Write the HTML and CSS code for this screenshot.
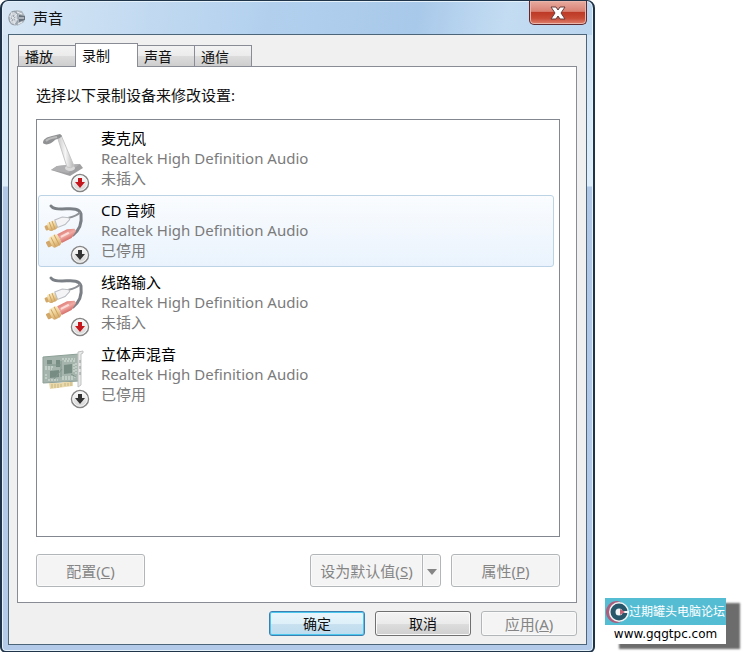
FILE: index.html
```html
<!DOCTYPE html>
<html lang="zh-CN">
<head>
    <meta charset="UTF-8">
    <meta name="viewport" content="width=device-width, initial-scale=1.0">
    <title>声音</title>
    <link rel="stylesheet" href="styles.css">
</head>
<body>
    <svg class="defs" width="0" height="0" aria-hidden="true">
        <defs>
            <linearGradient id="metal" x1="0" x2="1">
                <stop offset="0" stop-color="#c4c4c4"/>
                <stop offset=".5" stop-color="#f6f6f6"/>
                <stop offset="1" stop-color="#b4b4b4"/>
            </linearGradient>
            <linearGradient id="gold" x1="0" y1="0" x2="0" y2="1">
                <stop offset="0" stop-color="#f9ebc4"/>
                <stop offset=".5" stop-color="#ecd096"/>
                <stop offset="1" stop-color="#d3a768"/>
            </linearGradient>
            <linearGradient id="red" x1="0" y1="0" x2="0" y2="1">
                <stop offset="0" stop-color="#e2827c"/>
                <stop offset=".5" stop-color="#f0aca5"/>
                <stop offset="1" stop-color="#d66c68"/>
            </linearGradient>
            <linearGradient id="badge" x1="0" y1="0" x2="0" y2="1">
                <stop offset="0" stop-color="#ffffff"/>
                <stop offset="1" stop-color="#d2d2d2"/>
            </linearGradient>
            <symbol id="cable" viewBox="0 0 50 60">
                <path d="M9 6c2 3 6 3 11 3 8 0 17-2 19 5 1 8 0 15-8 21" fill="none" stroke="#7b8086" stroke-width="3" stroke-linecap="round"/>
                <path d="M26 18c5-1 10-3 12-6" fill="none" stroke="#8e9296" stroke-width="2"/>
                <g transform="translate(3 28) rotate(-21)">
                    <rect x="0" y="-2" width="6" height="5" rx="1" fill="#d3a768"/>
                    <rect x="3" y="-4" width="9" height="9" rx="2" fill="url(#gold)"/>
                    <path d="M6-4v9M9-4v9" stroke="#d0a560" stroke-width="1"/>
                    <path d="M12-4h8l6 3v2l-6 3h-8z" fill="#f4f4f6" stroke="#b9bcc0" stroke-width="1"/>
                </g>
                <g transform="translate(5 45) rotate(-27)">
                    <rect x="0" y="-3" width="6" height="6" rx="1" fill="#d3a768"/>
                    <rect x="4" y="-6" width="10" height="12" rx="3" fill="url(#gold)"/>
                    <path d="M7-5v10M11-6v12" stroke="#d0a05e" stroke-width="1"/>
                    <path d="M14-5h11l7 3v3l-7 4h-11z" fill="url(#red)"/>
                    <path d="M16-1h9" stroke="#fbdcd8" stroke-width="2"/>
                </g>
            </symbol>
            <symbol id="microphone" viewBox="0 0 50 60">
                <path d="M9 42l6-4 23-2 3 4-13 8z" fill="#a0a0a2"/>
                <path d="M9 42l6-4 23-2-12 9z" fill="#b0b0b2"/>
                <ellipse cx="28" cy="40" rx="5" ry="3" fill="#dadadb"/>
                <path d="M15 8l4-1 13 31q-3 3-7 1z" fill="url(#metal)" stroke="#c6c6c6" stroke-width="1"/>
                <path d="M1 15c0-4 4-6 9-7l8-2 2 2c-1 2-5 3-7 4-4 4-9 6-12 3z" fill="#919294"/>
                <path d="M4 13c3-3 7-3 11-4" fill="none" stroke="#bcbcbc" stroke-width="2"/>
            </symbol>
            <symbol id="card" viewBox="0 0 50 60">
                <path d="M1 13l36-3v27l-36 2z" fill="#a5b5ad" stroke="#8da097" stroke-width="1"/>
                <path d="M7 39h13l1-1h10v4l-23 3z" fill="#ead9ad"/>
                <path d="M10 40v4M13 40v4M16 40v4M19 40v3M23 39v3M26 39v3M29 38v4" stroke="#c7b47f" stroke-width="1"/>
                <path d="M5 16h5v4h-5zM14 16h4v7h-4zM22 21l8-1v9l-8 1zM8 27l9-1v7l-9 1z" fill="#778c83"/>
                <path d="M3 23h9M3 25h7M20 15h13M22 17h11M20 33h14M20 35h12M32 20v9M34 19v12M4 30v6M6 36h10" stroke="#dce6df" stroke-width="1" stroke-dasharray="2 1"/>
                <path d="M19 17v16M5 21h14M12 35l8-10M29 30l5 3" stroke="#80958b" stroke-width="1" fill="none"/>
                <path d="M36 8l5-1v2l-2 1v31l-3 2z" fill="#e9e9e9" stroke="#bfc2c1" stroke-width="1"/>
                <path d="M38 16v3M38 22v3M38 28v3" stroke="#8e9896" stroke-width="1"/>
            </symbol>
            <symbol id="arrow-badge" viewBox="0 0 20 20">
                <circle cx="10" cy="10" r="8.5" fill="url(#badge)" stroke="#858585" stroke-width="1.5"/>
                <circle cx="10" cy="10" r="7.2" fill="none" stroke="#f5f5f5" stroke-width="1"/>
                <path d="M8 5h4v4h3l-5 6-5-6h3z" fill="currentColor"/>
            </symbol>
        </defs>
    </svg>

    <main class="window">
        <header class="titlebar">
            <svg class="title-icon" viewBox="0 0 18 18" aria-hidden="true">
                <ellipse cx="7" cy="9" rx="6.5" ry="7.5" fill="#9da7b1"/>
                <ellipse cx="5.5" cy="9" rx="4.5" ry="6.5" fill="#cfd5da" stroke="#8e99a3"/>
                <ellipse cx="5" cy="9" rx="2" ry="3" fill="#9aa4ae"/>
                <path d="M3 3l4 13M1 7l9 4M2 12l7-7" stroke="#edf1f4" stroke-width=".7"/>
                <path d="M8 1l6 1 3 5-1 6-7 4 2-8z" fill="#aeb6be"/>
                <path d="M11 6l6 1v4l-6 2z" fill="#68737e"/>
                <path d="M9 3l5 2M11 9h5M10 15l4-2" stroke="#f3f5f7"/>
            </svg>
            <h1>声音</h1>
            <button class="close" type="button" aria-label="关闭">
                <svg viewBox="0 0 16 14" aria-hidden="true">
                    <path d="M1 1h5l2 3 2-3h5l-4 6 4 6h-5l-2-3-2 3H1l4-6z" fill="#fff" stroke="#693b3a" stroke-width="1"/>
                </svg>
            </button>
        </header>

        <div class="client">
            <div class="tabs" role="tablist">
                <button class="tab" type="button" role="tab">播放</button>
                <button class="tab active" type="button" role="tab" aria-selected="true">录制</button>
                <button class="tab" type="button" role="tab">声音</button>
                <button class="tab" type="button" role="tab">通信</button>
            </div>

            <section class="panel" role="tabpanel">
                <p class="hint" id="hint">选择以下录制设备来修改设置:</p>
                <ul class="devices" role="listbox" aria-labelledby="hint">
                    <li class="device" role="option">
                        <div class="device-icon">
                            <svg class="picture"><use href="#microphone"/></svg>
                            <svg class="state unplugged"><use href="#arrow-badge"/></svg>
                        </div>
                        <div class="device-text">
                            <div class="name">麦克风</div>
                            <div>Realtek High Definition Audio</div>
                            <div>未插入</div>
                        </div>
                    </li>
                    <li class="device selected" role="option" aria-selected="true">
                        <div class="device-icon">
                            <svg class="picture"><use href="#cable"/></svg>
                            <svg class="state"><use href="#arrow-badge"/></svg>
                        </div>
                        <div class="device-text">
                            <div class="name">CD 音频</div>
                            <div>Realtek High Definition Audio</div>
                            <div>已停用</div>
                        </div>
                    </li>
                    <li class="device" role="option">
                        <div class="device-icon">
                            <svg class="picture"><use href="#cable"/></svg>
                            <svg class="state unplugged"><use href="#arrow-badge"/></svg>
                        </div>
                        <div class="device-text">
                            <div class="name">线路输入</div>
                            <div>Realtek High Definition Audio</div>
                            <div>未插入</div>
                        </div>
                    </li>
                    <li class="device" role="option">
                        <div class="device-icon">
                            <svg class="picture"><use href="#card"/></svg>
                            <svg class="state"><use href="#arrow-badge"/></svg>
                        </div>
                        <div class="device-text">
                            <div class="name">立体声混音</div>
                            <div>Realtek High Definition Audio</div>
                            <div>已停用</div>
                        </div>
                    </li>
                </ul>
                <div class="actions">
                    <button class="btn configure" type="button" disabled>配置(<u>C</u>)</button>
                    <div class="split">
                        <button class="btn" type="button" disabled>设为默认值(<u>S</u>)</button>
                        <button class="btn drop" type="button" aria-label="更多" disabled>
                            <svg viewBox="0 0 10 6" aria-hidden="true"><path d="M0 0h10l-5 6z" fill="#858585"/></svg>
                        </button>
                    </div>
                    <button class="btn" type="button" disabled>属性(<u>P</u>)</button>
                </div>
            </section>

            <footer class="footer">
                <button class="btn default" type="button">确定</button>
                <button class="btn" type="button">取消</button>
                <button class="btn" type="button" disabled>应用(<u>A</u>)</button>
            </footer>
        </div>
    </main>

    <aside class="watermark">
        <div class="forum">
            <svg viewBox="0 0 24 24" aria-hidden="true">
                <path d="M12 1a11 11 0 1 0 0 22l4-1V2z" fill="#a85e7c"/>
                <circle cx="14" cy="12" r="10" fill="#f1f5f5"/>
                <circle cx="14" cy="12" r="6" fill="none" stroke="#28566a" stroke-width="5"/>
                <path d="M15 12h9" stroke="#f1f5f5" stroke-width="2"/>
                <circle cx="14" cy="12" r="3" fill="#f1f5f5"/>
                <path d="M15 9l5 3-5 3z" fill="#c36679"/>
            </svg>
            <span>过期罐头电脑论坛</span>
        </div>
        <div class="site">www.gqgtpc.com</div>
    </aside>
</body>
</html>
```

FILE: styles.css
```css
* {
    box-sizing: border-box;
}
body {
    display: flex;
    align-items: flex-end;
    gap: 10px;
    min-height: 100vh;
    margin: 0;
    padding-right: 24px;
    background: #fff;
    color: #111;
    font-family: "Noto Sans", "Noto Sans CJK SC", sans-serif;
    font-size: 15px;
    line-height: 20px;
}
.defs {
    position: absolute;
}
h1, p, ul {
    margin: 0;
    padding: 0;
}
button {
    padding: 0;
    color: inherit;
    font: inherit;
}

/* window frame */
.window {
    flex: 1;
    padding: 0 6px 6px;
    border: 2px solid #1f3448;
    border-top-width: 1px;
    border-radius: 8px 8px 6px 6px;
    background:
        linear-gradient(100deg, #d8e7f5 0, #c4dbf1 22%, #b2d0ee 45%, #a9c9ea 70%, #c3dcf2 85%, #bad5ee 100%) top / 100% 34px no-repeat,
        linear-gradient(#cfe2f3 0, #deeefa 185px, #b0c8e6 186px, #b3cbe8 100%);
    box-shadow: inset 0 0 0 1px #e4f1fb;
}
.titlebar {
    display: flex;
    align-items: center;
    height: 33px;
}
.title-icon {
    width: 18px;
    height: 18px;
    margin-right: 7px;
}
h1 {
    flex: 1;
    font-size: 15px;
    font-weight: 400;
}
.close {
    display: flex;
    align-items: center;
    justify-content: center;
    align-self: flex-start;
    width: 58px;
    height: 24px;
    border: 1px solid #5c2a30;
    border-top: 0;
    border-radius: 0 0 5px 5px;
    background: linear-gradient(#e7aca0 0, #d98173 45%, #bd3a27 50%, #c84a35 75%, #df8270 100%);
    box-shadow: inset 0 0 0 1px #eab5aa;
}
.close svg {
    width: 16px;
    height: 14px;
}
.client {
    padding: 8px 9px 8px 8px;
    border: 1px solid #4d6579;
    background: #f0f0f0;
}

/* tabs */
.tabs {
    display: flex;
    align-items: flex-end;
    height: 23px;
    padding-left: 1px;
}
.tab {
    width: 58px;
    height: 21px;
    margin-right: -1px;
    padding-left: 6px;
    border: 1px solid #898c95;
    border-bottom: 0;
    background: linear-gradient(#f3f3f3 0, #ebebeb 50%, #dcdcdc 52%, #cecece 100%);
    font-size: 14px;
    line-height: 19px;
    text-align: left;
}
.tab.active {
    width: 63px;
    height: 24px;
    margin-bottom: -1px;
    z-index: 1;
    background: #fff;
}
.panel {
    padding: 18px 16px 15px 18px;
    border: 1px solid #898c95;
    background: #fff;
}
.hint {
    margin-bottom: 14px;
}

/* device list */
.devices {
    min-height: 418px;
    padding: 3px 5px 3px 1px;
    border: 1px solid #828790;
    list-style: none;
}
.device {
    display: flex;
    height: 72px;
    padding: 4px 0 6px 3px;
    border: 1px solid transparent;
    border-radius: 3px;
    color: #7b7b7b;
}
.device.selected {
    border-color: #bcd3e6;
    background: linear-gradient(#fafcfe, #eaf3fd);
}
.device-icon {
    position: relative;
    width: 50px;
    margin-right: 9px;
}
.picture {
    width: 50px;
    height: 60px;
}
.state {
    position: absolute;
    right: 2px;
    bottom: -5px;
    width: 20px;
    height: 20px;
    color: #333;
}
.state.unplugged {
    color: #c4161c;
}
.name {
    color: #000;
}

/* buttons */
.btn {
    width: 96px;
    height: 25px;
    border: 1px solid #707070;
    border-radius: 3px;
    background: linear-gradient(#f3f3f3 0, #ebebeb 50%, #dddddd 52%, #cfcfcf 100%);
    box-shadow: inset 0 0 0 1px #fafafa;
    font-size: 14px;
    line-height: 20px;
}
.btn:disabled {
    border-color: #b3b6b8;
    background: #f4f4f4;
    color: #858585;
    font-size: 15px;
}
.btn.default {
    border-color: #3c7fb1;
    background: linear-gradient(#eaf5fb 0, #def0f9 50%, #c9e1f0 52%, #bcdcee 100%);
    box-shadow: inset 0 0 0 1px #4cc8ee;
}
.actions {
    display: flex;
    gap: 10px;
    margin-top: 17px;
}
.actions .btn {
    width: 109px;
    height: 33px;
}
.configure {
    margin-right: auto;
}
.split {
    display: flex;
}
.split .btn {
    width: 113px;
    border-radius: 3px 0 0 3px;
}
.split .drop {
    width: 19px;
    margin-left: -1px;
    border-radius: 0 3px 3px 0;
}
.drop svg {
    width: 10px;
    height: 6px;
    vertical-align: middle;
}
.footer {
    display: flex;
    justify-content: flex-end;
    gap: 10px;
    margin-top: 8px;
}

/* forum stamp */
.watermark {
    width: 121px;
    margin-bottom: 9px;
    background: #fff;
    box-shadow: 14px 5px 2px #6c6c6c;
}
.forum {
    display: flex;
    align-items: center;
    height: 27px;
    background: #55bdd3;
    color: #fff;
    font-size: 12px;
    white-space: nowrap;
}
.forum svg {
    width: 24px;
    height: 24px;
}
.site {
    height: 19px;
    color: #000;
    font-family: "DejaVu Sans", sans-serif;
    font-size: 12px;
    line-height: 18px;
    text-align: center;
}
```
